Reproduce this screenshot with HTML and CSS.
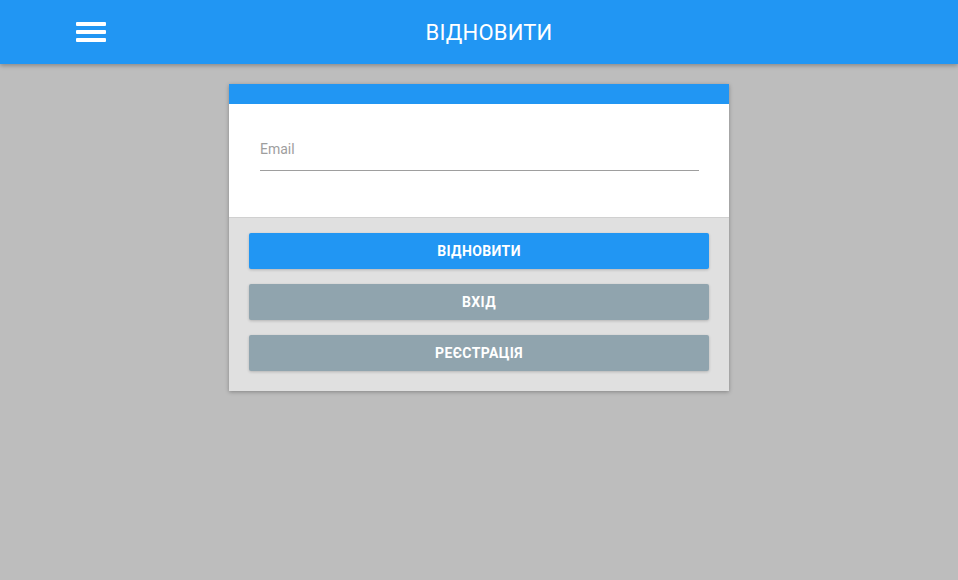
FILE: index.html
```html
<!DOCTYPE html>
<html lang="uk">
<head>
<meta charset="utf-8">
<title>Відновити</title>
<link rel="stylesheet" href="styles.css">
</head>
<body>
<header class="topbar">
  <button class="menu" aria-label="Меню"><span></span><span></span><span></span></button>
  <h1 class="title">ВІДНОВИТИ</h1>
</header>
<main class="page">
  <section class="card">
    <div class="card-strip"></div>
    <div class="card-body">
      <label class="field">
        <span class="field-label">Email</span>
        <span class="field-line"></span>
      </label>
    </div>
    <div class="card-actions">
      <button class="btn btn-primary">ВІДНОВИТИ</button>
      <button class="btn btn-grey">ВХІД</button>
      <button class="btn btn-grey">РЕЄСТРАЦІЯ</button>
    </div>
  </section>
</main>
</body>
</html>
```
FILE: styles.css
```css
* { box-sizing: border-box; }
html, body { margin: 0; padding: 0; height: 100%; }
body {
  background: #bdbdbd;
  font-family: Roboto, "Liberation Sans", Arial, sans-serif;
}
.topbar {
  position: relative;
  z-index: 2;
  height: 64px;
  background: #2196f3;
  box-shadow: 0 2px 4px rgba(0,0,0,0.25);
  display: flex;
  align-items: center;
  justify-content: center;
}
.menu {
  position: absolute;
  left: 76px;
  top: 22px;
  width: 30px;
  height: 20px;
  padding: 0;
  border: 0;
  background: none;
  display: flex;
  flex-direction: column;
  gap: 4px;
}
.menu span {
  display: block;
  width: 30px;
  height: 4px;
  background: #fff;
  border-radius: 1px;
}
.title {
  margin: 0;
  color: #fff;
  font-weight: 400;
  font-size: 22px;
  letter-spacing: 0.2px;
  padding-left: 20px;
}
.page {
  display: flex;
  justify-content: center;
  padding-top: 20px;
}
.card {
  width: 500px;
  background: #fff;
  box-shadow: 0 1px 4px rgba(0,0,0,0.3);
}
.card-strip {
  height: 20px;
  background: #2196f3;
}
.card-body {
  height: 113px;
  padding: 35px 30px 0 31px;
}
.field { display: block; }
.field-label {
  display: block;
  color: #9e9e9e;
  font-size: 14px;
  line-height: 20px;
  height: 31px;
}
.field-line {
  display: block;
  height: 1px;
  background: #9e9e9e;
}
.card-actions {
  background: #e0e0e0;
  border-top: 1px solid #d0d0d0;
  padding: 15px 20px 20px;
  display: flex;
  flex-direction: column;
  gap: 15px;
}
.btn {
  height: 36px;
  border: 0;
  border-radius: 2px;
  color: #fff;
  font-family: Roboto, "Liberation Sans", Arial, sans-serif;
  font-weight: 700;
  font-size: 14px;
  letter-spacing: 0.4px;
  box-shadow: 0 1px 3px rgba(0,0,0,0.2);
}
.btn-primary { background: #2196f3; }
.btn-grey { background: #90a4ae; }
```
